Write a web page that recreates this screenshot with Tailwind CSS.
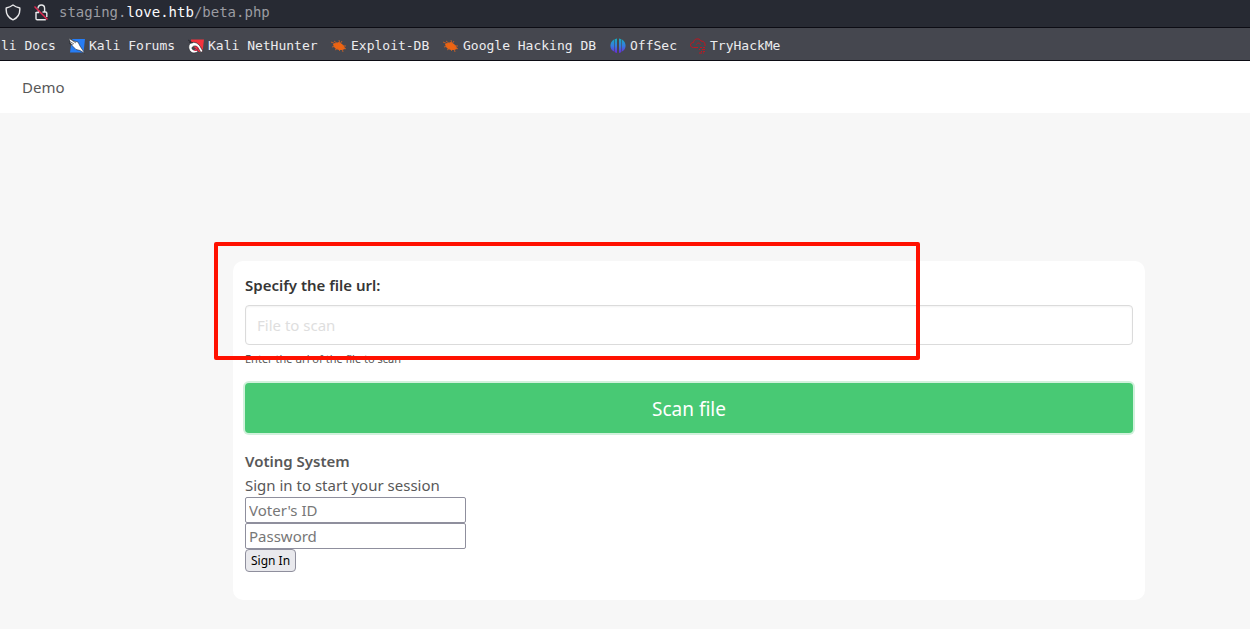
<!DOCTYPE html>
<html lang="en">
<head>
<meta charset="utf-8">
<meta name="viewport" content="width=device-width, initial-scale=1">
<title>Demo</title>
<script src="https://cdn.jsdelivr.net/npm/@tailwindcss/browser@4"></script>
</head>
<body class="flex min-h-screen flex-col overflow-x-hidden bg-[#f7f7f7] font-['Noto_Sans',sans-serif] text-[15px] leading-6 text-[#585858]">
<header class="font-['DejaVu_Sans_Mono',monospace]">
  <div class="flex h-7 items-center border-b border-[#0c0c14] bg-[#272a33] pb-[3px] pl-1">
    <svg class="mr-3 size-[17px] shrink-0" viewBox="0 0 17 17" fill="none" stroke="#e8e8ea" stroke-width="1.4" stroke-linejoin="round"><path d="M9 1C7.300 2.300 5 3.300 2.200 4c-.4 5.500 1.300 9.600 6.800 11.800 5.500-2.200 7.200-6.300 6.800-11.800C13 3.300 10.700 2.300 9 1z"/></svg>
    <svg class="mr-[9px] size-[17px] shrink-0" viewBox="0 0 17 17" fill="none" stroke="#e8e8ea" stroke-width="1.4"><path d="M5 4.500C5.200 2 6.500 1 8.300 1c2 0 3.300 1.300 3.300 3.500V8M9.500 8h3c.9 0 1.300.5 1.300 1.300V13M3 8v6.500c0 .7.400 1.200 1.200 1.200h8.600M3 8.500h2.500V6"/><path d="M1.500 2.500 14.500 15.500" stroke="#e22850" stroke-width="1.500"/></svg>
    <span class="text-[14px] text-[#9b9ca2]">staging.<span class="text-[#fbfbfe]">love.htb</span>/beta.php</span>
  </div>
  <nav aria-label="Bookmarks" class="flex h-[33px] items-center border-b border-[#0c0c14] bg-[#45474f] pt-1 text-[13px] whitespace-nowrap text-[#ececee] [&>a]:flex [&>a]:shrink-0 [&>a]:items-center [&>a]:gap-1 [&_svg]:size-4 [&_svg]:shrink-0">
    <a href="#" class="w-[69px] pl-px">li Docs</a>
    <a href="#" class="w-[119px]"><svg viewBox="0 0 16 16"><path d="M3 1h13l-1.500 13.500H1z" fill="#267df5"/><path d="M0 0 5 3l4 1 2 4 2 3 3 4.500-5-3-4-1-4-4-2-3z" fill="#fff" stroke="#24262c" stroke-width=".6"/><path d="m0 3 5 3M1 1l6 4M0 5l4 2" stroke="#24262c" stroke-width=".6"/></svg>Kali Forums</a>
    <a href="#" class="w-[143px]"><svg viewBox="0 0 16 16"><path d="M3 1.500h13L14.500 14H11L3 6z" fill="#f3333d"/><path d="M1 11C-.5 6 4 3 8.500 5c4 2 4 5 6.500 8l-2 1.500C10.500 11 10 8 7 8c-3.500 0-4 3.500-1 4l2-1 2 2.500c-4 3-8 1-9-2.500z" fill="#fff" stroke="#24262c" stroke-width=".7"/><path d="M6 12c3 1 5-1 3-3" fill="none" stroke="#d21e42" stroke-width="1.300"/><path d="m0 2 5 3M1 4l3 1" stroke="#24262c" stroke-width=".8"/></svg>Kali NetHunter</a>
    <a href="#" class="w-[112px]"><svg viewBox="0 0 16 16"><path d="m2 6 3-1 3-1 3 2 2 2 1 3-3 1-3 0-3-1-2-2z" fill="#ed6412"/><path d="m0 4 5 2M3 3l4 3M8 2l1 4 2-3M1 9l4-1M4 12l3-2m1 3 2-2m2 3-1-4m4 1-3-2m3-1-4 0" fill="none" stroke="#dc621d" stroke-width=".8"/></svg>Exploit-DB</a>
    <a href="#" class="w-[167px]"><svg viewBox="0 0 16 16"><path d="m2 6 3-1 3-1 3 2 2 2 1 3-3 1-3 0-3-1-2-2z" fill="#ed6412"/><path d="m0 4 5 2M3 3l4 3M8 2l1 4 2-3M1 9l4-1M4 12l3-2m1 3 2-2m2 3-1-4m4 1-3-2m3-1-4 0" fill="none" stroke="#dc621d" stroke-width=".8"/></svg>Google Hacking DB</a>
    <a href="#" class="w-20"><svg viewBox="0 0 16 16"><defs><linearGradient id="offsec" gradientUnits="userSpaceOnUse" x1="0" y1="1" x2="0" y2="15"><stop stop-color="#19a8c0"/><stop offset=".5" stop-color="#367be0"/><stop offset="1" stop-color="#6a29d8"/></linearGradient></defs><path d="M4 1.500v12C-.5 11.500-1 4.500 4 1.500zM4.600 1.200 7 .5V15c-1.500-.2-2-.7-2.400-1.300zM9 .5l2.400.7v12.500c-.5.600-1 1.100-2.400 1.300zM12 1.500c5 3 4.500 10 0 12z" fill="url(#offsec)"/></svg>OffSec</a>
    <a href="#"><svg viewBox="0 0 16 16" fill="none" stroke="#c11620" stroke-width="1"><path d="M8 9.500H3.500C-.5 9.500-.5 4.500 3.500 4.500 3.500.5 9.500-.5 11 3c3 0 4.500 2 4 5M6.500 6.500c.5-2 3.500-2 4 0"/><path d="M10 9.500h2m1 0h2M9 11.500h1m2 0h3M11 13.500h1m1 0h2M9 15h3m1 0h1"/></svg>TryHackMe</a>
  </nav>
</header>
<nav class="flex h-[52px] items-center bg-white px-[22px]"><a href="#">Demo</a></nav>
<div class="pt-[148px] pl-32">
<main class="mx-auto w-full max-w-[912px] rounded-[10px] bg-white px-3 pt-3 pb-7">
  <form class="relative">
    <label for="file" class="mb-2 block font-semibold text-[#363636]">Specify the file url:</label>
    <input id="file" type="text" placeholder="File to scan" class="block h-10 w-full rounded border border-[#dbdbdb] bg-white px-[11px] shadow-[inset_0_1px_2px_rgba(10,10,10,0.05)] placeholder:text-[#dedede]">
    <p class="mt-1 text-[11px] leading-5">Enter the url of the file to scan</p>
    <button type="button" class="mt-3.5 block h-[50px] w-full rounded bg-[#48c974] pt-0.5 text-[19px] text-white shadow-[0_0_0_2px_#d1f1dc]">Scan file</button>
    <div aria-hidden="true" class="pointer-events-none absolute -top-[31px] -left-[31px] h-[118px] w-[706px] rounded-xs border-4 border-[#ff1100]"></div>
  </form>
  <form class="mt-4 flex flex-col items-start">
    <h1 class="font-semibold">Voting System</h1>
    <p>Sign in to start your session</p>
    <input type="text" aria-label="Voter's ID" placeholder="Voter's ID" class="h-[26px] w-[221px] rounded-xs border border-[#8f8f9d] bg-white px-[3px] placeholder:text-[#777]">
    <input type="password" aria-label="Password" placeholder="Password" class="h-[26px] w-[221px] rounded-xs border border-[#8f8f9d] bg-white px-[3px] placeholder:text-[#777]">
    <button type="button" class="h-[23px] rounded border border-[#8f8f9d] bg-[#e9e9ed] px-[5px] text-[12px] leading-[22px] text-black">Sign In</button>
  </form>
</main>
</div>
</body>
</html>
